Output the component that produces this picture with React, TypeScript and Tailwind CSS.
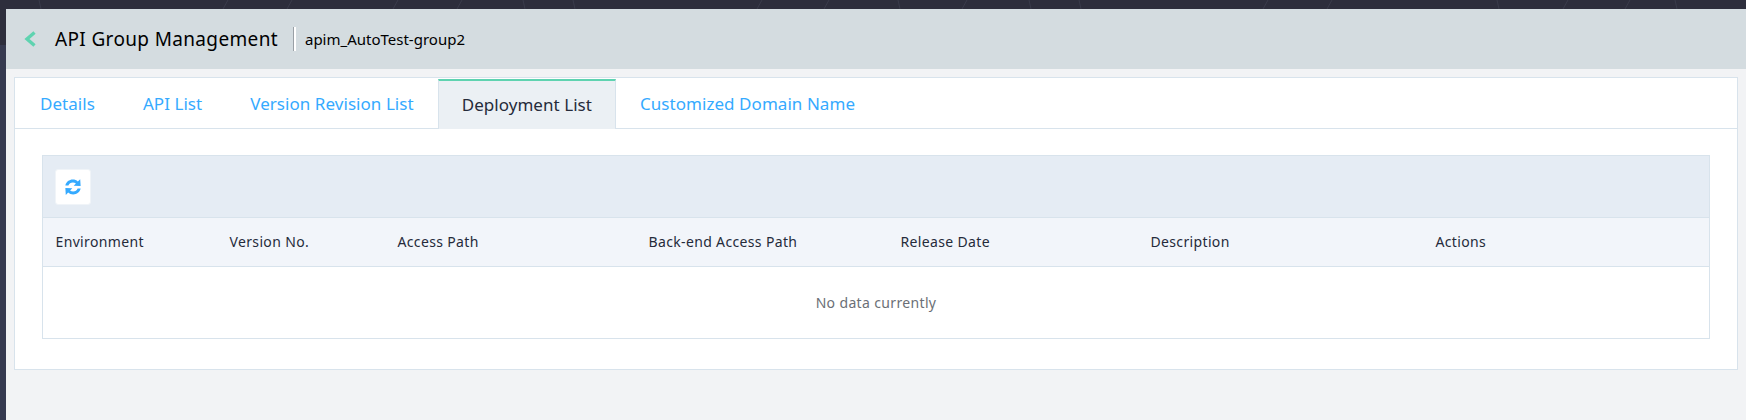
import React from "react";

function Tab({ label, active }: { label: string; active?: boolean }) {
  return active ? (
    <div className="-mb-px flex h-[50px] items-center border-x border-t-2 border-x-[#d8e3ec] border-t-[#5fd3b0] bg-[#ebf0f4] px-[23px] text-[#252b3a]">
      {label}
    </div>
  ) : (
    <div className="flex h-[50px] items-center border-x border-transparent px-[23px] pt-[2px] text-[#35aaff]">{label}</div>
  );
}

const cols: [string, string][] = [
  ["Environment", "w-[174px]"],
  ["Version No.", "w-[168px]"],
  ["Access Path", "w-[251px]"],
  ["Back-end Access Path", "w-[252px]"],
  ["Release Date", "w-[250px]"],
  ["Description", "w-[285px]"],
  ["Actions", "flex-1"],
];

const slashes = [223, 287, 393, 457, 757, 824, 962, 1263, 1327, 1563, 1625];
const backslashes = [39, 523, 573, 898, 1029, 1079, 1497, 1675];

export default function App() {
  return (
    <div className="flex h-[420px] w-[1746px] overflow-hidden bg-[#363a50] font-['Noto_Sans','Open_Sans',sans-serif]">
      <div className="flex w-[6px] shrink-0 flex-col">
        <div className="h-[45px] bg-[#2d2e3c]" />
      </div>
      <div className="flex min-w-0 flex-1 flex-col">
        <div className="h-[9px] shrink-0 bg-[#2d2e3c]">
          <svg width="1740" height="9" viewBox="6 0 1740 9" fill="none" className="block">
            {slashes.map((x) => (
              <line key={x} x1={x} y1="9" x2={x + 5} y2="0" stroke="#3a3c4b" strokeWidth="1" />
            ))}
            {backslashes.map((x) => (
              <line key={x} x1={x + 2} y1="9" x2={x} y2="0" stroke="#3a3c4b" strokeWidth="1" />
            ))}
          </svg>
        </div>
        <div className="flex h-[60px] shrink-0 items-center bg-[#d4dce0] pl-[18px]">
          <svg width="12" height="16" viewBox="0 0 12 16" fill="none" className="shrink-0">
            <path d="M10.5 1.5 L3 8 L10.5 14.5" stroke="#5fd3b0" strokeWidth="3.4" />
          </svg>
          <span className="ml-[19px] text-[19px] tracking-[0.35px] text-black">API Group Management</span>
          <span className="ml-[15px] h-[24px] w-[3px] border-l border-l-[#9aa0a6] bg-white" />
          <span className="ml-[9px] text-[15px] text-black">apim_AutoTest-group2</span>
        </div>
        <div className="flex-1 bg-[#f2f3f5] px-[8px] pb-[6px] pt-[8px]">
          <div className="h-[293px] border border-[#d8e3ec] bg-white">
            <div className="flex h-[51px] items-end border-b border-[#d8e3ec] pl-px text-[17px] tracking-[0.05px]">
              <Tab label="Details" />
              <Tab label="API List" />
              <Tab label="Version Revision List" />
              <Tab label="Deployment List" active />
              <Tab label="Customized Domain Name" />
            </div>
            <div className="mx-[27px] mt-[26px] border border-[#d8e3ec]">
              <div className="flex h-[62px] items-center border-b border-[#d8e3ec] bg-[#e5ecf4] pl-[12px]">
                <div className="flex h-[36px] w-[36px] items-center justify-center rounded-[3px] border border-[#f0f4f8] bg-white">
                  <svg width="18" height="18" viewBox="0 0 16 16" fill="#35aaff">
                    <path d="M1.2 6.6 C1.9 3.4 4.6 1.4 7.8 1.4 C9.6 1.4 11.1 2 12.3 3.1 L14.4 1 L14.8 7.2 L8.6 6.8 L10.6 4.9 C9.8 4.2 8.9 3.9 7.9 3.9 C6 3.9 4.5 5 3.9 6.6 Z" />
                    <path d="M14.8 9.4 C14.1 12.6 11.4 14.6 8.2 14.6 C6.4 14.6 4.9 14 3.7 12.9 L1.6 15 L1.2 8.8 L7.4 9.2 L5.4 11.1 C6.2 11.8 7.1 12.1 8.1 12.1 C10 12.1 11.5 11 12.1 9.4 Z" />
                  </svg>
                </div>
              </div>
              <div className="flex h-[49px] items-center border-b border-[#d8e3ec] bg-[#f2f5fa] pb-[1px] pl-[12.5px] text-[14px] tracking-[0.35px] text-[#252b3a]">
                {cols.map(([name, w]) => (
                  <div key={name} className={w}>{name}</div>
                ))}
              </div>
              <div className="flex h-[71px] items-center justify-center pb-[1px] text-[14px] tracking-[0.35px] text-[#6b6f76]">No data currently</div>
            </div>
          </div>
        </div>
      </div>
    </div>
  );
}
